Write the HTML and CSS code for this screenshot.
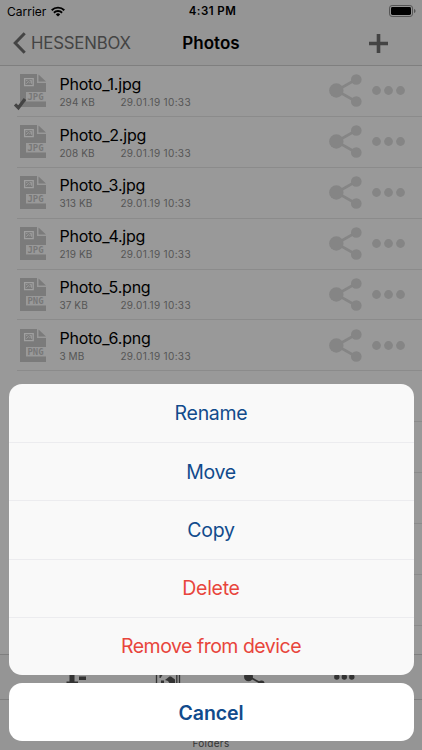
FILE: index.html
```html
<!DOCTYPE html>
<html lang="en">
<head>
<meta charset="utf-8">
<title>Photos</title>
<link rel="stylesheet" href="styles.css">
</head>
<body>
<svg class="defs" aria-hidden="true">
  <symbol id="file" viewBox="0 0 26 33">
    <path fill="#7b7b7b" d="M0 0h17v9h9v9H6v9.500h20V33H0z"/>
    <path fill="#7b7b7b" d="M18.500 .5l7.500 7h-7.500z"/>
    <path fill="none" stroke="#a0a0a0" stroke-width="1.300" d="M4.600 4.600h8.600v7H4.600z"/>
    <path fill="none" stroke="#999" stroke-width="1" d="M6.300 9.800l2-2.200 1.300 1.200 2-1.800M6 6.600h1.500M9.500 6.500h2v3.300"/>
  </symbol>
  <symbol id="share" viewBox="0 0 33 33">
    <path fill="none" stroke="#858585" stroke-width="2.600" d="M27 5.500L7.500 16.500 27 27.500"/>
    <g fill="#858585"><circle cx="7.300" cy="16.500" r="7.200"/><circle cx="27.300" cy="5.500" r="5.300"/><circle cx="27.300" cy="27.500" r="5.300"/></g>
  </symbol>
  <symbol id="dots" viewBox="0 0 33 9">
    <g fill="#858585"><circle cx="4.500" cy="4.500" r="4.400"/><circle cx="16.500" cy="4.500" r="4.400"/><circle cx="28.500" cy="4.500" r="4.400"/></g>
  </symbol>
</svg>
<div class="screen">
  <header class="header">
    <div class="status">
      <span class="carrier">Carrier</span>
      <svg class="wifi" viewBox="0 0 14 11"><g fill="none" stroke="#000" stroke-width="1.900"><path d="M.7 4.200a9 9 0 0 1 12.600 0"/><path d="M2.900 6.700a5.900 5.900 0 0 1 8.200 0"/></g><path d="M7 10.600L4.800 8.400a3.200 3.200 0 0 1 4.400 0z"/></svg>
      <span class="clock">4:31 PM</span>
      <svg class="battery" viewBox="0 0 27 12"><rect x=".5" y=".5" width="23" height="11" rx="2.600" fill="none" stroke="#555"/><rect x="2" y="2" width="20" height="8" rx="1.400"/><path fill="#555" d="M25 4c2 .6 2 3.400 0 4z"/></svg>
    </div>
    <nav class="nav">
      <a class="back"><svg class="chevron" viewBox="0 0 13 22"><path fill="none" stroke="#444" stroke-width="3" d="M11.700 1.200L2.200 11l9.500 9.800"/></svg><span>HESSENBOX</span></a>
      <h1 class="title">Photos</h1>
      <svg class="plus" viewBox="0 0 19 19"><path stroke="#444" stroke-width="3.600" d="M9.500 0v19M0 9.500h19"/></svg>
    </nav>
  </header>
  <main class="list">
    <div class="row">
      <div class="thumb"><svg class="file"><use href="#file"/><text class="ext" x="7.500" y="25.800" textLength="16" lengthAdjust="spacingAndGlyphs">JPG</text></svg><svg class="check" viewBox="0 0 12 12"><path fill="none" stroke="#444" stroke-width="3.200" d="M1 6.300l3.400 3.400L11 1"/></svg></div>
      <div class="info"><div class="name">Photo_1.jpg</div><div class="meta"><span class="size">294 KB</span><span class="date">29.01.19 10:33</span></div></div>
      <svg class="share"><use href="#share"/></svg><svg class="dots"><use href="#dots"/></svg>
    </div>
    <div class="row">
      <div class="thumb"><svg class="file"><use href="#file"/><text class="ext" x="7.500" y="25.800" textLength="16" lengthAdjust="spacingAndGlyphs">JPG</text></svg></div>
      <div class="info"><div class="name">Photo_2.jpg</div><div class="meta"><span class="size">208 KB</span><span class="date">29.01.19 10:33</span></div></div>
      <svg class="share"><use href="#share"/></svg><svg class="dots"><use href="#dots"/></svg>
    </div>
    <div class="row">
      <div class="thumb"><svg class="file"><use href="#file"/><text class="ext" x="7.500" y="25.800" textLength="16" lengthAdjust="spacingAndGlyphs">JPG</text></svg></div>
      <div class="info"><div class="name">Photo_3.jpg</div><div class="meta"><span class="size">313 KB</span><span class="date">29.01.19 10:33</span></div></div>
      <svg class="share"><use href="#share"/></svg><svg class="dots"><use href="#dots"/></svg>
    </div>
    <div class="row">
      <div class="thumb"><svg class="file"><use href="#file"/><text class="ext" x="7.500" y="25.800" textLength="16" lengthAdjust="spacingAndGlyphs">JPG</text></svg></div>
      <div class="info"><div class="name">Photo_4.jpg</div><div class="meta"><span class="size">219 KB</span><span class="date">29.01.19 10:33</span></div></div>
      <svg class="share"><use href="#share"/></svg><svg class="dots"><use href="#dots"/></svg>
    </div>
    <div class="row">
      <div class="thumb"><svg class="file"><use href="#file"/><text class="ext" x="7.500" y="25.800" textLength="16" lengthAdjust="spacingAndGlyphs">PNG</text></svg></div>
      <div class="info"><div class="name">Photo_5.png</div><div class="meta"><span class="size">37 KB</span><span class="date">29.01.19 10:33</span></div></div>
      <svg class="share"><use href="#share"/></svg><svg class="dots"><use href="#dots"/></svg>
    </div>
    <div class="row">
      <div class="thumb"><svg class="file"><use href="#file"/><text class="ext" x="7.500" y="25.800" textLength="16" lengthAdjust="spacingAndGlyphs">PNG</text></svg></div>
      <div class="info"><div class="name">Photo_6.png</div><div class="meta"><span class="size">3 MB</span><span class="date">29.01.19 10:33</span></div></div>
      <svg class="share"><use href="#share"/></svg><svg class="dots"><use href="#dots"/></svg>
    </div>
    <div class="row"></div><div class="row"></div><div class="row"></div><div class="row"></div><div class="row"></div>
  </main>
  <div class="toolbar">
    <svg viewBox="0 0 26 26"><path fill="#333" d="M7.500 2h5v20.500H16V24H4.500v-1.500h3zM17 17.500h7V21h-7zM17 11h5v3h-5z"/></svg>
    <svg viewBox="-3 0 26 26"><path fill="none" stroke="#333" stroke-width="1.300" d="M1.500 25V3h23v22M21.800 25V6"/><path fill="#333" d="M4.500 16h3l-2 3h-1zM6 21.500h3V25H6zM10 21l4.500-3.500h1.500l4 3V25h-5l-2-3z"/></svg>
    <svg viewBox="0 0 26 26"><path fill="none" stroke="#333" stroke-width="1.800" d="M20 10L7.500 17.500l13 7"/><g fill="#333"><circle cx="7.500" cy="17.700" r="4.500"/><circle cx="20" cy="10" r="3"/><circle cx="20.500" cy="24.500" r="3"/></g></svg>
    <svg viewBox="0 0 26 26"><g fill="#333"><circle cx="5.800" cy="18" r="2.700"/><circle cx="13.300" cy="18" r="2.700"/><circle cx="20.800" cy="18" r="2.700"/></g></svg>
  </div>
  <footer class="tabbar">Folders</footer>
  <div class="sheet">
    <div class="actions">
      <div class="action">Rename</div>
      <div class="action">Move</div>
      <div class="action">Copy</div>
      <div class="action danger">Delete</div>
      <div class="action danger wide">Remove from device</div>
    </div>
    <div class="cancel">Cancel</div>
  </div>
</div>
</body>
</html>
```
FILE: styles.css
```css
* { box-sizing: border-box; }
body { margin: 0; font-family: Inter, Roboto, sans-serif; color: #000; }
svg { display: block; flex: none; overflow: visible; }
.defs { position: absolute; width: 0; height: 0; }
.screen { position: relative; width: 422px; height: 750px; overflow: hidden; background: #999; display: flex; flex-direction: column; }
.header { height: 66px; flex: none; background: #959595; border-bottom: 1px solid #7f7f7f; }
.status { height: 21px; display: grid; grid-template-columns: auto 14px 1fr auto; padding: 0 6px 0 7px; align-items: center; font-size: 12px; line-height: 21px; }
.carrier { width: 38px; white-space: nowrap; }
.wifi { width: 14px; height: 11px; margin-left: 6px; }
.clock { justify-self: center; font-weight: 600; font-size: 11.500px; letter-spacing: .45px; padding-right: 23px; padding-top: 1px; }
.battery { width: 27px; height: 12px; }
.nav { height: 44px; display: grid; grid-template-columns: 1fr auto 1fr; align-items: center; padding: 0 34px 0 13px; }
.back { display: flex; align-items: center; gap: 5px; color: #444; font-size: 16.800px; letter-spacing: -.18px; }
.chevron { width: 13px; height: 22px; }
.title { margin: 0 0 0 21px; font-size: 17px; font-weight: 600; letter-spacing: 0; }
.plus { width: 19px; height: 19px; justify-self: end; }
.list { flex: none; height: 588px; overflow: hidden; }
.row { height: 50.900px; margin-left: 17px; border-bottom: 1px solid #8b8b8b; display: flex; align-items: center; padding: 0 17px 0 3px; }
.thumb { position: relative; width: 26px; height: 33px; margin-right: 13px; }
.file { width: 26px; height: 33px; }
.ext { font: 700 8px "DejaVu Sans Mono", monospace; fill: #777; }
.check { position: absolute; left: -6px; top: 24px; width: 12px; height: 12px; }
.info { flex: 1; padding: .4px 0 0 .4px; }
.name { font-size: 16px; line-height: 20px; letter-spacing: -.22px; }
.meta { display: flex; font-size: 10px; line-height: 13px; color: #555; margin-top: 2px; letter-spacing: .1px; }
.size { width: 61px; }
.date { letter-spacing: .34px; }
.share { width: 33px; height: 33px; margin-right: 10px; }
.dots { width: 33px; height: 9px; }
.toolbar { height: 46px; flex: none; background: #959595; border-top: 1px solid #7f7f7f; border-bottom: 1px solid #7f7f7f; display: flex; justify-content: space-between; padding: 4px 65px 0 62px; }
.toolbar svg { width: 26px; height: 26px; }
.tabbar { flex: 1; background: #959595; text-align: center; font-size: 10px; line-height: 12px; padding-top: 37px; color: #333; letter-spacing: .3px; }
.sheet { position: absolute; left: 8.500px; right: 8.500px; top: 384px; display: flex; flex-direction: column; gap: 8px; text-align: center; font-size: 19.500px; color: #114b8c; }
.actions { height: 291px; border-radius: 13px; overflow: hidden; background: #f9f9f9; display: grid; grid-template-rows: repeat(5, 1fr); }
.action { display: flex; align-items: center; justify-content: center; border-top: 1px solid #ececef; letter-spacing: -.3px; }
.action:first-child { border-top: 0; }
.danger { color: #e8453c; }
.wide { letter-spacing: -.5px; }
.cancel { height: 58px; border-radius: 13px; background: #fff; display: flex; align-items: center; justify-content: center; font-weight: 600; padding-top: 1px; letter-spacing: -.1px; }
```
